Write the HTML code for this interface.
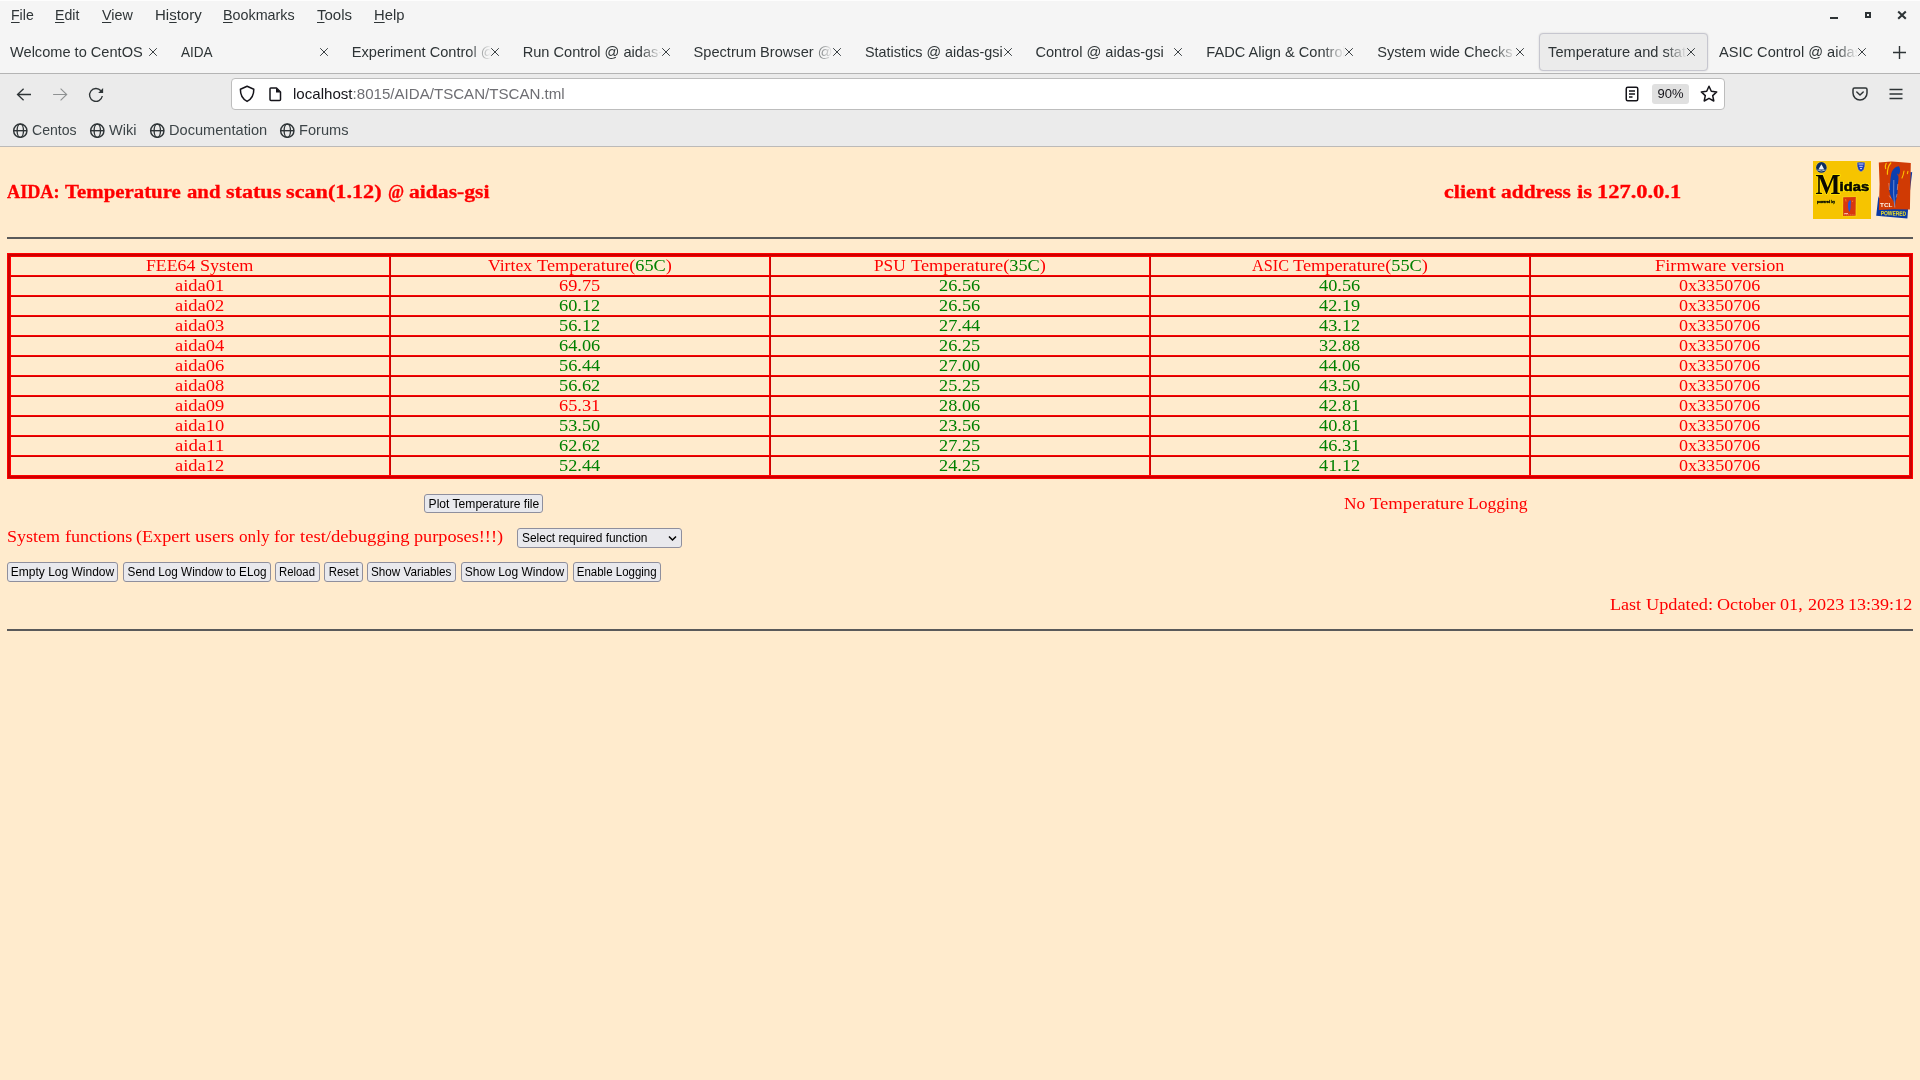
<!DOCTYPE html>
<html>
<head>
<meta charset="utf-8">
<title>Temperature and status scan</title>
<style>
html,body{margin:0;padding:0;}
body{width:1920px;height:1080px;overflow:hidden;background:#ffebcd;position:relative;font-family:"Liberation Sans",sans-serif;}
.abs{position:absolute;white-space:nowrap;}
#wrap{position:absolute;left:0;top:0;width:1920px;height:1080px;will-change:transform;}
/* ---------- browser chrome ---------- */
#topbar{left:0;top:0;width:1920px;height:73px;background:#f5f5f5;}
#topline{left:0;top:0;width:1920px;height:1px;background:#fdfdfd;}
#sep1{left:0;top:73px;width:1920px;height:1px;background:#b4b4b4;}
#navbar{left:0;top:74px;width:1920px;height:72px;background:#ebebeb;}
#sep2{left:0;top:146px;width:1920px;height:1px;background:#bcbab8;}
.menu{top:6px;font-size:15px;line-height:18px;color:#2e3436;}
.menu u{text-decoration-thickness:1px;text-underline-offset:2px;}
.tab{top:43px;font-size:14.6px;line-height:18px;color:#2e3436;}
.clip{width:139px;overflow:hidden;-webkit-mask-image:linear-gradient(to right,#000 117px,transparent 139px);mask-image:linear-gradient(to right,#000 117px,transparent 139px);}
.tabx{top:47px;width:10px;height:10px;}
#acttab{left:1539px;top:33px;width:167px;height:36px;border:1px solid #c6c6cf;border-radius:4px;background:#ebebeb;box-shadow:0 0 2px rgba(0,0,0,.15);}
#urlbar{left:231px;top:78px;width:1492px;height:30px;border:1px solid #bdbdbd;border-radius:4px;background:#fff;}
#url{left:293px;top:85px;transform:scaleX(1.006);transform-origin:0 0;font-size:15px;line-height:18px;color:#15141a;}
#url span{color:#6e6e73;}
#zoom{left:1652px;top:84px;width:37px;height:20px;border-radius:3px;background:#e0e0e0;font-size:13px;line-height:20px;text-align:center;color:#15141a;}
.bm{top:121px;font-size:14.6px;line-height:18px;color:#3d4548;}
/* ---------- page ---------- */
.serif{font-family:"Liberation Serif",serif;}
.serif i{font-style:normal;color:#008000;}
.w{position:absolute;top:0;transform-origin:0 0;white-space:pre;}
.red{color:#ff0000;}
.grn{color:#008000;}
#h1{left:7px;top:181px;font-size:17px;line-height:22px;font-weight:bold;-webkit-text-stroke:0.3px #f00;}
#h2{left:1444px;top:181px;font-size:17px;line-height:22px;font-weight:bold;-webkit-text-stroke:0.3px #f00;}
.hr{left:7px;width:1906px;height:2px;background:#5a5a5a;}
.btn{box-sizing:border-box;height:20px;border:1px solid #8f8f9d;border-radius:3px;background:#e9e9ed;color:#000;font-size:12px;line-height:18px;text-align:center;}
.bs{display:inline-block;transform-origin:50% 50%;}
.cell{font-family:"Liberation Serif",serif;font-size:16px;line-height:18px;height:18px;text-align:center;width:378px;}
</style>
</head>
<body>
<div id="wrap">
<!-- chrome backgrounds -->
<div class="abs" id="topbar"></div>
<div class="abs" id="topline"></div>
<div class="abs" id="sep1"></div>
<div class="abs" id="navbar"></div>
<div class="abs" id="sep2"></div>

<!-- MENUBAR -->
<div class="abs menu" style="left:11px;transform:scaleX(0.940);transform-origin:0 0"><u>F</u>ile</div>
<div class="abs menu" style="left:55px;transform:scaleX(0.940);transform-origin:0 0"><u>E</u>dit</div>
<div class="abs menu" style="left:102px;transform:scaleX(0.955);transform-origin:0 0"><u>V</u>iew</div>
<div class="abs menu" style="left:155px;transform:scaleX(1.000);transform-origin:0 0">Hi<u>s</u>tory</div>
<div class="abs menu" style="left:223px;transform:scaleX(0.955);transform-origin:0 0"><u>B</u>ookmarks</div>
<div class="abs menu" style="left:317px;transform:scaleX(1.000);transform-origin:0 0"><u>T</u>ools</div>
<div class="abs menu" style="left:374px;transform:scaleX(0.985);transform-origin:0 0"><u>H</u>elp</div>
<svg class="abs" style="left:1822px;top:4px" width="90" height="22" viewBox="0 0 90 22"><rect x="8" y="13" width="8" height="2" fill="#2e3436"/><rect x="44" y="9" width="4" height="4" fill="none" stroke="#2e3436" stroke-width="2"/><path d="M76.200 7.600 L83.800 14.700 M83.800 7.600 L76.200 14.700" stroke="#2e3436" stroke-width="2.100" fill="none"/></svg>
<!-- /MENUBAR -->
<!-- TABS -->
<div class="abs" id="acttab"></div>
<div class="abs tab" style="left:10.0px">Welcome to CentOS</div>
<svg class="abs tabx" style="left:148.0px" viewBox="0 0 10 10"><path d="M1.200 1.200 L8.800 8.800 M8.800 1.200 L1.200 8.800" stroke="#3a4043" stroke-width="1" fill="none"/></svg>
<div class="abs tab" style="left:180.9px"><span style="display:inline-block;transform:scaleX(0.93);transform-origin:0 0">AIDA</span></div>
<svg class="abs tabx" style="left:318.9px" viewBox="0 0 10 10"><path d="M1.200 1.200 L8.800 8.800 M8.800 1.200 L1.200 8.800" stroke="#3a4043" stroke-width="1" fill="none"/></svg>
<div class="abs tab clip" style="left:351.8px">Experiment Control @ aidas-gsi</div>
<svg class="abs tabx" style="left:489.8px" viewBox="0 0 10 10"><path d="M1.200 1.200 L8.800 8.800 M8.800 1.200 L1.200 8.800" stroke="#3a4043" stroke-width="1" fill="none"/></svg>
<div class="abs tab clip" style="left:522.7px">Run Control @ aidas-gsi</div>
<svg class="abs tabx" style="left:660.7px" viewBox="0 0 10 10"><path d="M1.200 1.200 L8.800 8.800 M8.800 1.200 L1.200 8.800" stroke="#3a4043" stroke-width="1" fill="none"/></svg>
<div class="abs tab clip" style="left:693.6px">Spectrum Browser @ aidas-gsi</div>
<svg class="abs tabx" style="left:831.6px" viewBox="0 0 10 10"><path d="M1.200 1.200 L8.800 8.800 M8.800 1.200 L1.200 8.800" stroke="#3a4043" stroke-width="1" fill="none"/></svg>
<div class="abs tab" style="left:864.5px"><span style="display:inline-block;transform:scaleX(0.985);transform-origin:0 0">Statistics @ aidas-gsi</span></div>
<svg class="abs tabx" style="left:1002.5px" viewBox="0 0 10 10"><path d="M1.200 1.200 L8.800 8.800 M8.800 1.200 L1.200 8.800" stroke="#3a4043" stroke-width="1" fill="none"/></svg>
<div class="abs tab" style="left:1035.4px">Control @ aidas-gsi</div>
<svg class="abs tabx" style="left:1173.4px" viewBox="0 0 10 10"><path d="M1.200 1.200 L8.800 8.800 M8.800 1.200 L1.200 8.800" stroke="#3a4043" stroke-width="1" fill="none"/></svg>
<div class="abs tab clip" style="left:1206.3px">FADC Align &amp; Control @ aidas-gsi</div>
<svg class="abs tabx" style="left:1344.3px" viewBox="0 0 10 10"><path d="M1.200 1.200 L8.800 8.800 M8.800 1.200 L1.200 8.800" stroke="#3a4043" stroke-width="1" fill="none"/></svg>
<div class="abs tab clip" style="left:1377.2px">System wide Checks @ aidas-gsi</div>
<svg class="abs tabx" style="left:1515.2px" viewBox="0 0 10 10"><path d="M1.200 1.200 L8.800 8.800 M8.800 1.200 L1.200 8.800" stroke="#3a4043" stroke-width="1" fill="none"/></svg>
<div class="abs tab clip" style="left:1548.1px">Temperature and status scan @ aidas-gsi</div>
<svg class="abs tabx" style="left:1686.1px" viewBox="0 0 10 10"><path d="M1.200 1.200 L8.800 8.800 M8.800 1.200 L1.200 8.800" stroke="#3a4043" stroke-width="1" fill="none"/></svg>
<div class="abs tab clip" style="left:1719.0px">ASIC Control @ aidas-gsi</div>
<svg class="abs tabx" style="left:1857.0px" viewBox="0 0 10 10"><path d="M1.200 1.200 L8.800 8.800 M8.800 1.200 L1.200 8.800" stroke="#3a4043" stroke-width="1" fill="none"/></svg>
<svg class="abs" style="left:1892px;top:45px" width="15" height="15" viewBox="0 0 15 15"><path d="M7.500 1 V14 M1 7.500 H14" stroke="#2e3436" stroke-width="1.400" fill="none"/></svg>
<!-- /TABS -->
<!-- NAV -->
<div class="abs" id="urlbar"></div>
<svg class="abs" style="left:14px;top:85px" width="20" height="20" viewBox="0 0 20 20"><path d="M17 9.500 H3.600 M9.600 3.700 L3.500 9.500 L9.600 15.300" stroke="#2e3436" stroke-width="1.300" fill="none" stroke-linejoin="miter"/></svg>
<svg class="abs" style="left:50px;top:85px" width="20" height="20" viewBox="0 0 20 20"><path d="M3.100 9.500 H16.600 M10.600 3.700 L16.700 9.500 L10.600 15.300" stroke="#8e9192" stroke-width="1.100" fill="none" stroke-linejoin="miter"/></svg>
<svg class="abs" style="left:86px;top:85px" width="20" height="20" viewBox="0 0 20 20"><path d="M16.300 11 A6.400 6.400 0 1 1 14.900 5.800" stroke="#2e3436" stroke-width="1.350" fill="none"/><path d="M17.100 3.100 V8 H12.200 Z" fill="#2e3436"/></svg>
<svg class="abs" style="left:237px;top:84px" width="20" height="20" viewBox="0 0 20 20"><path d="M10.100 2.300 L16.800 5.300 C16.900 10.600 14.800 15 10.100 17.400 C5.400 15 3.300 10.600 3.400 5.300 Z" stroke="#15141a" stroke-width="1.500" fill="none" stroke-linejoin="round"/></svg>
<svg class="abs" style="left:266px;top:85px" width="18" height="18" viewBox="0 0 18 18"><path d="M4 3.800 Q4 3 4.800 3 H10.500 L14.500 7 V14.500 Q14.500 15.500 13.500 15.500 H5 Q4 15.500 4 14.500 Z" stroke="#15141a" stroke-width="1.500" fill="none" stroke-linejoin="round"/><path d="M10 3 V7.500 H14.500 Z" fill="#15141a"/></svg>
<div class="abs" id="url">localhost<span>:8015/AIDA/TSCAN/TSCAN.tml</span></div>
<svg class="abs" style="left:1622px;top:84px" width="20" height="20" viewBox="0 0 20 20"><rect x="4.250" y="3.250" width="11.500" height="13.500" rx="1.500" stroke="#15141a" stroke-width="1.500" fill="none"/><path d="M7 7 H13 M7 10 H13 M7 13 H10.500" stroke="#15141a" stroke-width="1.300" fill="none"/></svg>
<div class="abs" id="zoom">90%</div>
<svg class="abs" style="left:1699px;top:84px" width="20" height="20" viewBox="0 0 20 20"><path d="M10 2.300 L12.300 7.300 L17.700 7.900 L13.700 11.600 L14.800 17 L10 14.300 L5.200 17 L6.300 11.600 L2.300 7.900 L7.700 7.300 Z" stroke="#15141a" stroke-width="1.500" fill="none" stroke-linejoin="round"/></svg>
<svg class="abs" style="left:1850px;top:84px" width="20" height="20" viewBox="0 0 20 20"><path d="M3 5.500 Q3 4 4.500 4 H15.500 Q17 4 17 5.500 V9 A7 7 0 0 1 3 9 Z" stroke="#2e3436" stroke-width="1.500" fill="none" stroke-linejoin="round"/><path d="M6.800 8 L10 11 L13.200 8" stroke="#2e3436" stroke-width="1.500" fill="none" stroke-linecap="round" stroke-linejoin="round"/></svg>
<svg class="abs" style="left:1886px;top:84px" width="20" height="20" viewBox="0 0 20 20"><path d="M3.500 5.500 H16.500 M3.500 10 H16.500 M3.500 14.500 H16.500" stroke="#2e3436" stroke-width="1.400" fill="none"/></svg>
<!-- /NAV -->
<!-- BOOKMARKS -->
<svg class="abs" style="left:12px;top:123px" width="16" height="16" viewBox="0 0 16 16"><circle cx="8.300" cy="7.700" r="6.650" stroke="#2e3436" stroke-width="1.450" fill="none"/><ellipse cx="8.300" cy="7.700" rx="3.200" ry="6.650" stroke="#2e3436" stroke-width="1.350" fill="none"/><path d="M1.600 7.700 H15" stroke="#2e3436" stroke-width="1.350"/></svg>
<div class="abs bm" style="left:32px;transform:scaleX(0.966);transform-origin:0 0">Centos</div>
<svg class="abs" style="left:89px;top:123px" width="16" height="16" viewBox="0 0 16 16"><circle cx="8.300" cy="7.700" r="6.650" stroke="#2e3436" stroke-width="1.450" fill="none"/><ellipse cx="8.300" cy="7.700" rx="3.200" ry="6.650" stroke="#2e3436" stroke-width="1.350" fill="none"/><path d="M1.600 7.700 H15" stroke="#2e3436" stroke-width="1.350"/></svg>
<div class="abs bm" style="left:109px;transform:scaleX(1);transform-origin:0 0">Wiki</div>
<svg class="abs" style="left:149px;top:123px" width="16" height="16" viewBox="0 0 16 16"><circle cx="8.300" cy="7.700" r="6.650" stroke="#2e3436" stroke-width="1.450" fill="none"/><ellipse cx="8.300" cy="7.700" rx="3.200" ry="6.650" stroke="#2e3436" stroke-width="1.350" fill="none"/><path d="M1.600 7.700 H15" stroke="#2e3436" stroke-width="1.350"/></svg>
<div class="abs bm" style="left:169px;transform:scaleX(1);transform-origin:0 0">Documentation</div>
<svg class="abs" style="left:279px;top:123px" width="16" height="16" viewBox="0 0 16 16"><circle cx="8.300" cy="7.700" r="6.650" stroke="#2e3436" stroke-width="1.450" fill="none"/><ellipse cx="8.300" cy="7.700" rx="3.200" ry="6.650" stroke="#2e3436" stroke-width="1.350" fill="none"/><path d="M1.600 7.700 H15" stroke="#2e3436" stroke-width="1.350"/></svg>
<div class="abs bm" style="left:299px;transform:scaleX(1);transform-origin:0 0">Forums</div>
<!-- /BOOKMARKS -->
<!-- PAGE -->
<div class="abs serif red" style="left:7.00px;top:181px;font-size:18px;line-height:22px;height:22px;font-weight:bold;-webkit-text-stroke:0.3px #f00;"><span class="w" style="left:0.00px;transform:scaleX(1.0098)">AIDA:</span><span class="w" style="left:58.11px;transform:scaleX(1.1588)">Temperature</span><span class="w" style="left:179.59px;transform:scaleX(1.1520)">and</span><span class="w" style="left:218.64px;transform:scaleX(1.2269)">status</span><span class="w" style="left:279.47px;transform:scaleX(1.2336)">scan(1.12)</span><span class="w" style="left:380.67px;transform:scaleX(0.9626)">@</span><span class="w" style="left:402.40px;transform:scaleX(1.2015)">aidas-gsi</span></div>
<div class="abs serif red" style="left:1444.00px;top:181px;font-size:18px;line-height:22px;height:22px;font-weight:bold;-webkit-text-stroke:0.3px #f00;"><span class="w" style="left:0.00px;transform:scaleX(1.2261)">client</span><span class="w" style="left:57.11px;transform:scaleX(1.1912)">address</span><span class="w" style="left:132.62px;transform:scaleX(1.2654)">is</span><span class="w" style="left:153.45px;transform:scaleX(1.2468)">127.0.0.1</span></div>
<div class="abs hr" style="top:237px"></div>
<div class="abs hr" style="top:629px"></div>
<div class="abs" style="left:7px;top:253px;width:1906px;height:226px;border:1px solid #ff0000;box-sizing:border-box"></div>
<div class="abs" style="left:8px;top:254px;width:1900px;height:220px;border:2px solid #cc0000"></div>
<div class="abs" style="left:10px;top:256px;width:1900px;height:220px;border:1px solid #ff0000;box-sizing:border-box"></div>
<div class="abs" style="left:11px;top:275px;width:1898px;height:1px;background:#ff0000"></div>
<div class="abs" style="left:11px;top:276px;width:1898px;height:1px;background:#cc0000"></div>
<div class="abs" style="left:11px;top:295px;width:1898px;height:1px;background:#ff0000"></div>
<div class="abs" style="left:11px;top:296px;width:1898px;height:1px;background:#cc0000"></div>
<div class="abs" style="left:11px;top:315px;width:1898px;height:1px;background:#ff0000"></div>
<div class="abs" style="left:11px;top:316px;width:1898px;height:1px;background:#cc0000"></div>
<div class="abs" style="left:11px;top:335px;width:1898px;height:1px;background:#ff0000"></div>
<div class="abs" style="left:11px;top:336px;width:1898px;height:1px;background:#cc0000"></div>
<div class="abs" style="left:11px;top:355px;width:1898px;height:1px;background:#ff0000"></div>
<div class="abs" style="left:11px;top:356px;width:1898px;height:1px;background:#cc0000"></div>
<div class="abs" style="left:11px;top:375px;width:1898px;height:1px;background:#ff0000"></div>
<div class="abs" style="left:11px;top:376px;width:1898px;height:1px;background:#cc0000"></div>
<div class="abs" style="left:11px;top:395px;width:1898px;height:1px;background:#ff0000"></div>
<div class="abs" style="left:11px;top:396px;width:1898px;height:1px;background:#cc0000"></div>
<div class="abs" style="left:11px;top:415px;width:1898px;height:1px;background:#ff0000"></div>
<div class="abs" style="left:11px;top:416px;width:1898px;height:1px;background:#cc0000"></div>
<div class="abs" style="left:11px;top:435px;width:1898px;height:1px;background:#ff0000"></div>
<div class="abs" style="left:11px;top:436px;width:1898px;height:1px;background:#cc0000"></div>
<div class="abs" style="left:11px;top:455px;width:1898px;height:1px;background:#ff0000"></div>
<div class="abs" style="left:11px;top:456px;width:1898px;height:1px;background:#cc0000"></div>
<div class="abs" style="left:389px;top:257px;width:1px;height:218px;background:#ff0000"></div>
<div class="abs" style="left:390px;top:257px;width:1px;height:218px;background:#cc0000"></div>
<div class="abs" style="left:769px;top:257px;width:1px;height:218px;background:#ff0000"></div>
<div class="abs" style="left:770px;top:257px;width:1px;height:218px;background:#cc0000"></div>
<div class="abs" style="left:1149px;top:257px;width:1px;height:218px;background:#ff0000"></div>
<div class="abs" style="left:1150px;top:257px;width:1px;height:218px;background:#cc0000"></div>
<div class="abs" style="left:1529px;top:257px;width:1px;height:218px;background:#ff0000"></div>
<div class="abs" style="left:1530px;top:257px;width:1px;height:218px;background:#cc0000"></div>
<div class="abs serif red" style="left:146.40px;top:257px;font-size:16px;line-height:18px;height:18px;"><span class="w" style="left:0.00px;transform:scaleX(1.1093)">FEE64</span><span class="w" style="left:53.89px;transform:scaleX(1.1316)">System</span></div>
<div class="abs serif red" style="left:488.27px;top:257px;font-size:16px;line-height:18px;height:18px;"><span class="w" style="left:0.00px;transform:scaleX(1.1033)">Virtex</span><span class="w" style="left:48.62px;transform:scaleX(1.1432)">Temperature(<i>65C</i>)</span></div>
<div class="abs serif red" style="left:874.46px;top:257px;font-size:16px;line-height:18px;height:18px;"><span class="w" style="left:0.00px;transform:scaleX(1.0788)">PSU</span><span class="w" style="left:36.25px;transform:scaleX(1.1432)">Temperature(<i>35C</i>)</span></div>
<div class="abs serif red" style="left:1251.82px;top:257px;font-size:16px;line-height:18px;height:18px;"><span class="w" style="left:0.00px;transform:scaleX(1.0137)">ASIC</span><span class="w" style="left:41.53px;transform:scaleX(1.1432)">Temperature(<i>55C</i>)</span></div>
<div class="abs serif red" style="left:1655.28px;top:257px;font-size:16px;line-height:18px;height:18px;"><span class="w" style="left:0.00px;transform:scaleX(1.1480)">Firmware</span><span class="w" style="left:75.98px;transform:scaleX(1.1347)">version</span></div>
<div class="abs serif red" style="left:175.35px;top:277px;font-size:16px;line-height:18px;height:18px;"><span class="w" style="left:0.00px;transform:scaleX(1.1557)">aida01</span></div>
<div class="abs serif red" style="left:559.40px;top:277px;font-size:16px;line-height:18px;height:18px;"><span class="w" style="left:0.00px;transform:scaleX(1.1445)">69.75</span></div>
<div class="abs serif grn" style="left:939.40px;top:277px;font-size:16px;line-height:18px;height:18px;"><span class="w" style="left:0.00px;transform:scaleX(1.1445)">26.56</span></div>
<div class="abs serif grn" style="left:1319.40px;top:277px;font-size:16px;line-height:18px;height:18px;"><span class="w" style="left:0.00px;transform:scaleX(1.1445)">40.56</span></div>
<div class="abs serif red" style="left:1679.31px;top:277px;font-size:16px;line-height:18px;height:18px;"><span class="w" style="left:0.00px;transform:scaleX(1.1302)">0x3350706</span></div>
<div class="abs serif red" style="left:175.35px;top:297px;font-size:16px;line-height:18px;height:18px;"><span class="w" style="left:0.00px;transform:scaleX(1.1557)">aida02</span></div>
<div class="abs serif grn" style="left:559.40px;top:297px;font-size:16px;line-height:18px;height:18px;"><span class="w" style="left:0.00px;transform:scaleX(1.1445)">60.12</span></div>
<div class="abs serif grn" style="left:939.40px;top:297px;font-size:16px;line-height:18px;height:18px;"><span class="w" style="left:0.00px;transform:scaleX(1.1445)">26.56</span></div>
<div class="abs serif grn" style="left:1319.40px;top:297px;font-size:16px;line-height:18px;height:18px;"><span class="w" style="left:0.00px;transform:scaleX(1.1445)">42.19</span></div>
<div class="abs serif red" style="left:1679.31px;top:297px;font-size:16px;line-height:18px;height:18px;"><span class="w" style="left:0.00px;transform:scaleX(1.1302)">0x3350706</span></div>
<div class="abs serif red" style="left:175.35px;top:317px;font-size:16px;line-height:18px;height:18px;"><span class="w" style="left:0.00px;transform:scaleX(1.1557)">aida03</span></div>
<div class="abs serif grn" style="left:559.40px;top:317px;font-size:16px;line-height:18px;height:18px;"><span class="w" style="left:0.00px;transform:scaleX(1.1445)">56.12</span></div>
<div class="abs serif grn" style="left:939.40px;top:317px;font-size:16px;line-height:18px;height:18px;"><span class="w" style="left:0.00px;transform:scaleX(1.1445)">27.44</span></div>
<div class="abs serif grn" style="left:1319.40px;top:317px;font-size:16px;line-height:18px;height:18px;"><span class="w" style="left:0.00px;transform:scaleX(1.1445)">43.12</span></div>
<div class="abs serif red" style="left:1679.31px;top:317px;font-size:16px;line-height:18px;height:18px;"><span class="w" style="left:0.00px;transform:scaleX(1.1302)">0x3350706</span></div>
<div class="abs serif red" style="left:175.35px;top:337px;font-size:16px;line-height:18px;height:18px;"><span class="w" style="left:0.00px;transform:scaleX(1.1557)">aida04</span></div>
<div class="abs serif grn" style="left:559.40px;top:337px;font-size:16px;line-height:18px;height:18px;"><span class="w" style="left:0.00px;transform:scaleX(1.1445)">64.06</span></div>
<div class="abs serif grn" style="left:939.40px;top:337px;font-size:16px;line-height:18px;height:18px;"><span class="w" style="left:0.00px;transform:scaleX(1.1445)">26.25</span></div>
<div class="abs serif grn" style="left:1319.40px;top:337px;font-size:16px;line-height:18px;height:18px;"><span class="w" style="left:0.00px;transform:scaleX(1.1445)">32.88</span></div>
<div class="abs serif red" style="left:1679.31px;top:337px;font-size:16px;line-height:18px;height:18px;"><span class="w" style="left:0.00px;transform:scaleX(1.1302)">0x3350706</span></div>
<div class="abs serif red" style="left:175.35px;top:357px;font-size:16px;line-height:18px;height:18px;"><span class="w" style="left:0.00px;transform:scaleX(1.1557)">aida06</span></div>
<div class="abs serif grn" style="left:559.40px;top:357px;font-size:16px;line-height:18px;height:18px;"><span class="w" style="left:0.00px;transform:scaleX(1.1445)">56.44</span></div>
<div class="abs serif grn" style="left:939.40px;top:357px;font-size:16px;line-height:18px;height:18px;"><span class="w" style="left:0.00px;transform:scaleX(1.1445)">27.00</span></div>
<div class="abs serif grn" style="left:1319.40px;top:357px;font-size:16px;line-height:18px;height:18px;"><span class="w" style="left:0.00px;transform:scaleX(1.1445)">44.06</span></div>
<div class="abs serif red" style="left:1679.31px;top:357px;font-size:16px;line-height:18px;height:18px;"><span class="w" style="left:0.00px;transform:scaleX(1.1302)">0x3350706</span></div>
<div class="abs serif red" style="left:175.35px;top:377px;font-size:16px;line-height:18px;height:18px;"><span class="w" style="left:0.00px;transform:scaleX(1.1557)">aida08</span></div>
<div class="abs serif grn" style="left:559.40px;top:377px;font-size:16px;line-height:18px;height:18px;"><span class="w" style="left:0.00px;transform:scaleX(1.1445)">56.62</span></div>
<div class="abs serif grn" style="left:939.40px;top:377px;font-size:16px;line-height:18px;height:18px;"><span class="w" style="left:0.00px;transform:scaleX(1.1445)">25.25</span></div>
<div class="abs serif grn" style="left:1319.40px;top:377px;font-size:16px;line-height:18px;height:18px;"><span class="w" style="left:0.00px;transform:scaleX(1.1445)">43.50</span></div>
<div class="abs serif red" style="left:1679.31px;top:377px;font-size:16px;line-height:18px;height:18px;"><span class="w" style="left:0.00px;transform:scaleX(1.1302)">0x3350706</span></div>
<div class="abs serif red" style="left:175.35px;top:397px;font-size:16px;line-height:18px;height:18px;"><span class="w" style="left:0.00px;transform:scaleX(1.1557)">aida09</span></div>
<div class="abs serif red" style="left:559.40px;top:397px;font-size:16px;line-height:18px;height:18px;"><span class="w" style="left:0.00px;transform:scaleX(1.1445)">65.31</span></div>
<div class="abs serif grn" style="left:939.40px;top:397px;font-size:16px;line-height:18px;height:18px;"><span class="w" style="left:0.00px;transform:scaleX(1.1445)">28.06</span></div>
<div class="abs serif grn" style="left:1319.40px;top:397px;font-size:16px;line-height:18px;height:18px;"><span class="w" style="left:0.00px;transform:scaleX(1.1445)">42.81</span></div>
<div class="abs serif red" style="left:1679.31px;top:397px;font-size:16px;line-height:18px;height:18px;"><span class="w" style="left:0.00px;transform:scaleX(1.1302)">0x3350706</span></div>
<div class="abs serif red" style="left:175.35px;top:417px;font-size:16px;line-height:18px;height:18px;"><span class="w" style="left:0.00px;transform:scaleX(1.1557)">aida10</span></div>
<div class="abs serif grn" style="left:559.40px;top:417px;font-size:16px;line-height:18px;height:18px;"><span class="w" style="left:0.00px;transform:scaleX(1.1445)">53.50</span></div>
<div class="abs serif grn" style="left:939.40px;top:417px;font-size:16px;line-height:18px;height:18px;"><span class="w" style="left:0.00px;transform:scaleX(1.1445)">23.56</span></div>
<div class="abs serif grn" style="left:1319.40px;top:417px;font-size:16px;line-height:18px;height:18px;"><span class="w" style="left:0.00px;transform:scaleX(1.1445)">40.81</span></div>
<div class="abs serif red" style="left:1679.31px;top:417px;font-size:16px;line-height:18px;height:18px;"><span class="w" style="left:0.00px;transform:scaleX(1.1302)">0x3350706</span></div>
<div class="abs serif red" style="left:175.35px;top:437px;font-size:16px;line-height:18px;height:18px;"><span class="w" style="left:0.00px;transform:scaleX(1.1720)">aida11</span></div>
<div class="abs serif grn" style="left:559.40px;top:437px;font-size:16px;line-height:18px;height:18px;"><span class="w" style="left:0.00px;transform:scaleX(1.1445)">62.62</span></div>
<div class="abs serif grn" style="left:939.40px;top:437px;font-size:16px;line-height:18px;height:18px;"><span class="w" style="left:0.00px;transform:scaleX(1.1445)">27.25</span></div>
<div class="abs serif grn" style="left:1319.40px;top:437px;font-size:16px;line-height:18px;height:18px;"><span class="w" style="left:0.00px;transform:scaleX(1.1445)">46.31</span></div>
<div class="abs serif red" style="left:1679.31px;top:437px;font-size:16px;line-height:18px;height:18px;"><span class="w" style="left:0.00px;transform:scaleX(1.1302)">0x3350706</span></div>
<div class="abs serif red" style="left:175.35px;top:457px;font-size:16px;line-height:18px;height:18px;"><span class="w" style="left:0.00px;transform:scaleX(1.1557)">aida12</span></div>
<div class="abs serif grn" style="left:559.40px;top:457px;font-size:16px;line-height:18px;height:18px;"><span class="w" style="left:0.00px;transform:scaleX(1.1445)">52.44</span></div>
<div class="abs serif grn" style="left:939.40px;top:457px;font-size:16px;line-height:18px;height:18px;"><span class="w" style="left:0.00px;transform:scaleX(1.1445)">24.25</span></div>
<div class="abs serif grn" style="left:1319.40px;top:457px;font-size:16px;line-height:18px;height:18px;"><span class="w" style="left:0.00px;transform:scaleX(1.1445)">41.12</span></div>
<div class="abs serif red" style="left:1679.31px;top:457px;font-size:16px;line-height:18px;height:18px;"><span class="w" style="left:0.00px;transform:scaleX(1.1302)">0x3350706</span></div>
<div class="abs btn" style="left:424px;top:494px;width:119px;height:19px;line-height:18px"><span class="bs" style="transform:scaleX(1.008)">Plot Temperature file</span></div>
<div class="abs serif red" style="left:1344.30px;top:495px;font-size:16px;line-height:18px;height:18px;"><span class="w" style="left:0.00px;transform:scaleX(1.0827)">No</span><span class="w" style="left:25.74px;transform:scaleX(1.1649)">Temperature</span><span class="w" style="left:124.19px;transform:scaleX(1.0973)">Logging</span></div>
<div class="abs serif red" style="left:7.00px;top:528px;font-size:16px;line-height:18px;height:18px;"><span class="w" style="left:0.00px;transform:scaleX(1.1260)">System</span><span class="w" style="left:57.62px;transform:scaleX(1.1300)">functions</span><span class="w" style="left:129.44px;transform:scaleX(1.1330)">(Expert</span><span class="w" style="left:188.35px;transform:scaleX(1.1931)">users</span><span class="w" style="left:232.15px;transform:scaleX(1.0726)">only</span><span class="w" style="left:267.20px;transform:scaleX(1.1133)">for</span><span class="w" style="left:292.51px;transform:scaleX(1.1620)">test/debugging</span><span class="w" style="left:406.55px;transform:scaleX(1.1387)">purposes!!!)</span></div>
<div class="abs btn" style="left:517px;top:528px;width:165px;height:20px;text-align:left;padding-left:4px"><span class="bs" style="transform:scaleX(0.995);transform-origin:0 50%">Select required function</span><svg style="position:absolute;right:4px;top:6px" width="9" height="7" viewBox="0 0 9 7"><path d="M1 1.500 L4.500 5 L8 1.500" stroke="#000" stroke-width="1.500" fill="none"/></svg></div>
<div class="abs btn" style="left:7px;top:562px;width:111px;height:20px;line-height:18px"><span class="bs" style="transform:scaleX(1.000)">Empty Log Window</span></div>
<div class="abs btn" style="left:123px;top:562px;width:148px;height:20px;line-height:18px"><span class="bs" style="transform:scaleX(0.978)">Send Log Window to ELog</span></div>
<div class="abs btn" style="left:275px;top:562px;width:45px;height:20px;line-height:18px"><span class="bs" style="transform:scaleX(0.945)">Reload</span></div>
<div class="abs btn" style="left:324px;top:562px;width:39px;height:20px;line-height:18px"><span class="bs" style="transform:scaleX(0.953)">Reset</span></div>
<div class="abs btn" style="left:367px;top:562px;width:89px;height:20px;line-height:18px"><span class="bs" style="transform:scaleX(0.975)">Show Variables</span></div>
<div class="abs btn" style="left:461px;top:562px;width:107px;height:20px;line-height:18px"><span class="bs" style="transform:scaleX(1.000)">Show Log Window</span></div>
<div class="abs btn" style="left:573px;top:562px;width:88px;height:20px;line-height:18px"><span class="bs" style="transform:scaleX(0.958)">Enable Logging</span></div>
<div class="abs serif red" style="left:1610.00px;top:596px;font-size:16px;line-height:18px;height:18px;"><span class="w" style="left:0.00px;transform:scaleX(1.1287)">Last</span><span class="w" style="left:35.64px;transform:scaleX(1.1427)">Updated:</span><span class="w" style="left:107.20px;transform:scaleX(1.1354)">October</span><span class="w" style="left:170.24px;transform:scaleX(1.1365)">01,</span><span class="w" style="left:197.50px;transform:scaleX(1.1365)">2023</span><span class="w" style="left:238.41px;transform:scaleX(1.1283)">13:39:12</span></div>
<svg class="abs" style="left:1813px;top:161px" width="58" height="58" viewBox="0 0 58 58"><rect width="58" height="58" fill="#f6c400"/><circle cx="8.400" cy="6.400" r="5.700" fill="#f9d84a"/><circle cx="8.400" cy="6.400" r="5.300" fill="#0c2c60"/><path d="M8.400 3.300 L11.300 8.500 H5.500 Z" fill="#eef3f6"/><path d="M4.200 9 Q8.400 11 12.600 9" stroke="#c9d6e6" stroke-width="0.800" fill="none"/><path d="M44 1.200 Q48 0.600 52 1.200 Q52.300 6 51 8.300 Q49.800 10.300 48 11 Q46.200 10.300 45 8.300 Q43.700 6 44 1.200 Z" fill="#1d3fc0" stroke="#f9d84a" stroke-width="0.600"/><path d="M45.500 3 H50.500 M46.300 5.300 H49.700 M47 7.600 H49" stroke="#dfe6ff" stroke-width="0.900" fill="none"/><text x="2.600" y="32.900" font-family="Liberation Serif" font-weight="bold" font-size="29.500" fill="#0a0800" stroke="#ffe600" stroke-width="1.600" paint-order="stroke" textLength="25" lengthAdjust="spacingAndGlyphs">M</text><text x="26.600" y="30" font-family="Liberation Sans" font-weight="bold" font-size="12.400" fill="#ffe600" stroke="#ffe600" stroke-width="2.200" textLength="29.500" lengthAdjust="spacingAndGlyphs">idas</text><text x="26.600" y="30" font-family="Liberation Sans" font-weight="bold" font-size="12.400" fill="#0a0800" stroke="#0a0800" stroke-width="0.550" textLength="29.500" lengthAdjust="spacingAndGlyphs">idas</text><text x="4" y="41.800" font-family="Liberation Sans" font-weight="bold" font-size="4.400" fill="#ffe600" stroke="#ffe600" stroke-width="1" textLength="18" lengthAdjust="spacingAndGlyphs">powered by</text><text x="4" y="41.800" font-family="Liberation Sans" font-weight="bold" font-size="4.400" fill="#000" stroke="#000" stroke-width="0.350" textLength="18" lengthAdjust="spacingAndGlyphs">powered by</text><rect x="29.600" y="35.600" width="13.800" height="19.800" fill="#f9dc20"/><path d="M30.200 36.200 L42.800 36 L42.600 54.800 L30.100 54.900 Z" fill="#d8380e"/><path d="M37.300 39 C35.600 39.500 34.800 42 35 45 C35 47.500 35.600 49.500 36.500 51 C37.400 49 37.800 46 37.600 43.500 C38 42 38.200 40 37.300 39 Z" fill="#2b56d6"/><path d="M32.600 38 L33 40.500 M39.800 39.600 L39.300 41" stroke="#ff9a1a" stroke-width="0.700" fill="none"/><path d="M31.200 52.600 H35 " stroke="#f4b8a0" stroke-width="1.200" fill="none"/><path d="M31 53.800 H41.500" stroke="#e88a68" stroke-width="0.700" stroke-dasharray="1.200 0.700" fill="none"/></svg>
<svg class="abs" style="left:1868px;top:154px" width="52" height="72" viewBox="0 0 52 72"><path d="M10.400 42 L8.200 61.800 L39.400 64.600 L40 56 L42.400 33 L44.200 18.200 L42.300 18 L41 40 L11 44 Z" fill="#0a3aa6"/><path d="M10.800 8.500 L23.500 7.600 L30.500 8 L42.800 9 L42.400 30 L41.900 55.400 L26 55.200 L10.900 55.900 L11.600 30 Z" fill="#d03a04"/><path d="M31 12.300 C27.500 12.300 24.300 15.500 23.200 20 C22 25.500 22.600 29.500 21.300 33.500 C21 38 22.400 43 25.600 47.200 L26.900 53.300 L27.500 47 C29.200 43 30 38.500 29.400 33.500 C29.900 29 31 25.500 30.300 21.300 C32.300 19.800 32.700 15.500 31 12.300 Z" fill="#0b3fb0"/><path d="M28.800 19.500 L30.800 20.700 L30.300 22.500 Z" fill="#d03a04"/><path d="M25.800 26 Q25 40 26.800 53.500" stroke="#c9d3ee" stroke-width="0.500" fill="none"/><path d="M20.800 29 L21.500 36 M21.200 41.500 L23 44.500 M29.800 30 L29.300 36 M29 40 L28.200 43.500" stroke="#e9b8b0" stroke-width="0.500" fill="none"/><path d="M18.200 9.300 Q16.800 12 17.600 14.600 M22.800 9 Q19.200 13 19.400 20.200" stroke="#ffbe00" stroke-width="1.200" fill="none" stroke-linecap="round"/><path d="M36 17 Q35.400 21 34 24 M39.900 17.400 L39.400 19.600" stroke="#ffbe00" stroke-width="1.100" fill="none" stroke-linecap="round"/><text x="12" y="53" font-family="Liberation Sans" font-weight="bold" font-size="5.800" fill="#fff4ea" textLength="12.400" lengthAdjust="spacingAndGlyphs">TCL</text><text x="12.800" y="61.500" font-family="Liberation Sans" font-weight="bold" font-size="6.200" fill="#f2e428" textLength="25.400" lengthAdjust="spacingAndGlyphs" transform="rotate(1.500 25 60)">POWERED</text></svg>
<!-- /PAGE -->

</div>
</body>
</html>
